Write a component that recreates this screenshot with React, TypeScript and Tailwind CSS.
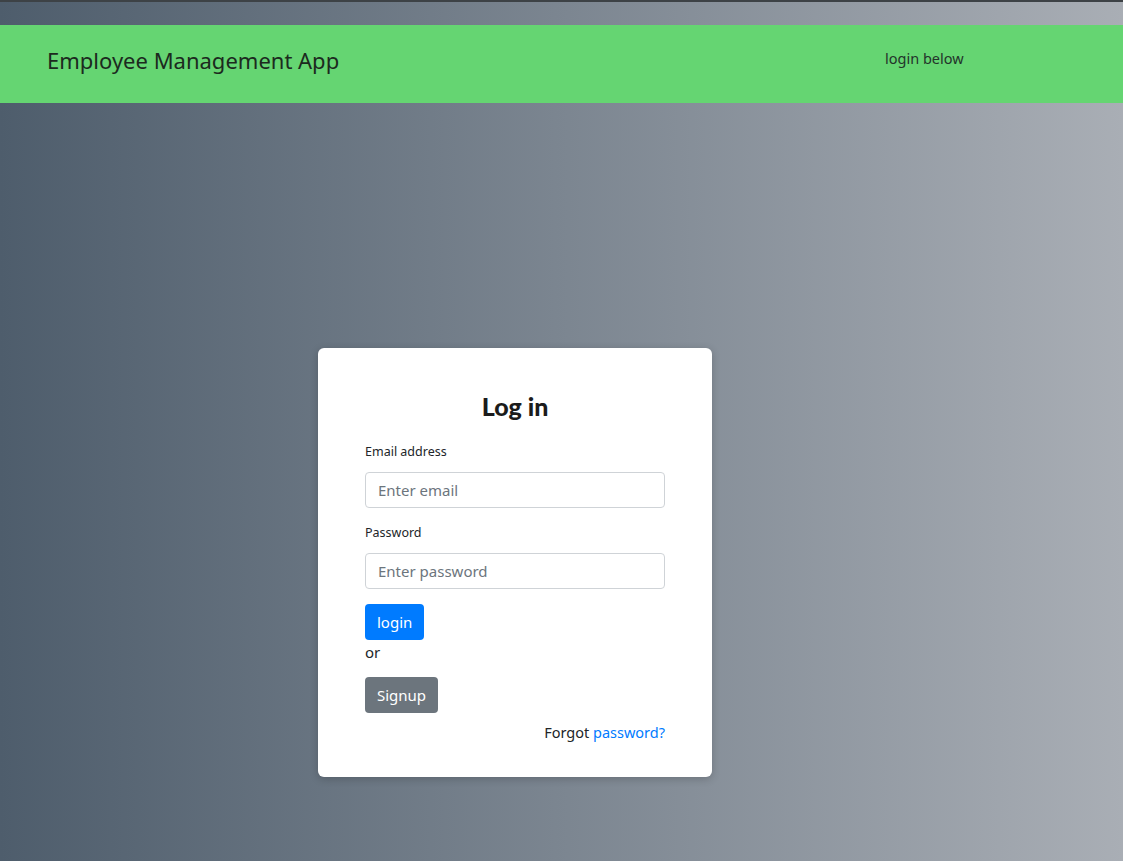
import React from "react";

export default function App() {
  return (
    <div
      className="min-h-[861px] w-full flex flex-col bg-[linear-gradient(to_right,#4e5d6c,#a9aeb5)]"
      style={{ fontFamily: '"Noto Sans", "Open Sans", sans-serif' }}
    >
      <div className="h-[2px] bg-[#3d4246]" />
      <div className="h-[23px]" />
      <header className="h-[78px] bg-[#65d572] flex items-center">
        <div className="pl-[47px] text-[22px] text-[#1c2a1e] leading-none w-[885px] pb-[8px]">
          Employee Management App
        </div>
        <div className="text-[14.5px] text-[#23332a] pb-[10px]">login below</div>
      </header>
      <div className="pt-[245px] pl-[318px]">
        <div className="w-[394px] bg-white rounded-[6px] shadow-[0_2px_8px_rgba(0,0,0,0.2)] px-[47px] pt-[40px] pb-[33px]">
          <h3
            className="text-center text-[25px] text-[#1b1b1b] leading-[36px] mb-[18px]"
            style={{ fontFamily: 'Lato, "Noto Sans", sans-serif', fontWeight: 900 }}
          >
            Log in
          </h3>
          <div className="text-[12.5px] text-[#212529] leading-[19px] mb-[11px]">Email address</div>
          <input
            className="w-full h-[36px] border border-[#cfd3d7] rounded-[4px] px-[12px] text-[15px] text-[#495057] placeholder:text-[#6c757d] outline-none"
            placeholder="Enter email"
          />
          <div className="text-[12.5px] text-[#212529] leading-[19px] mt-[15px] mb-[11px]">Password</div>
          <input
            type="password"
            className="w-full h-[36px] border border-[#cfd3d7] rounded-[4px] px-[12px] text-[15px] text-[#495057] placeholder:text-[#6c757d] outline-none"
            placeholder="Enter password"
          />
          <button className="mt-[15px] h-[36px] px-[12px] bg-[#007bff] text-white text-[15px] rounded-[4px] block">
            login
          </button>
          <div className="text-[15px] text-[#212529] leading-[24px]">or</div>
          <button className="mt-[13px] h-[36px] px-[12px] bg-[#6c757d] text-white text-[15px] rounded-[4px] block">
            Signup
          </button>
          <div className="text-right text-[14.5px] text-[#212529] leading-[24px] mt-[7px]">
            Forgot <a className="text-[#007bff]">password?</a>
          </div>
        </div>
      </div>
    </div>
  );
}
